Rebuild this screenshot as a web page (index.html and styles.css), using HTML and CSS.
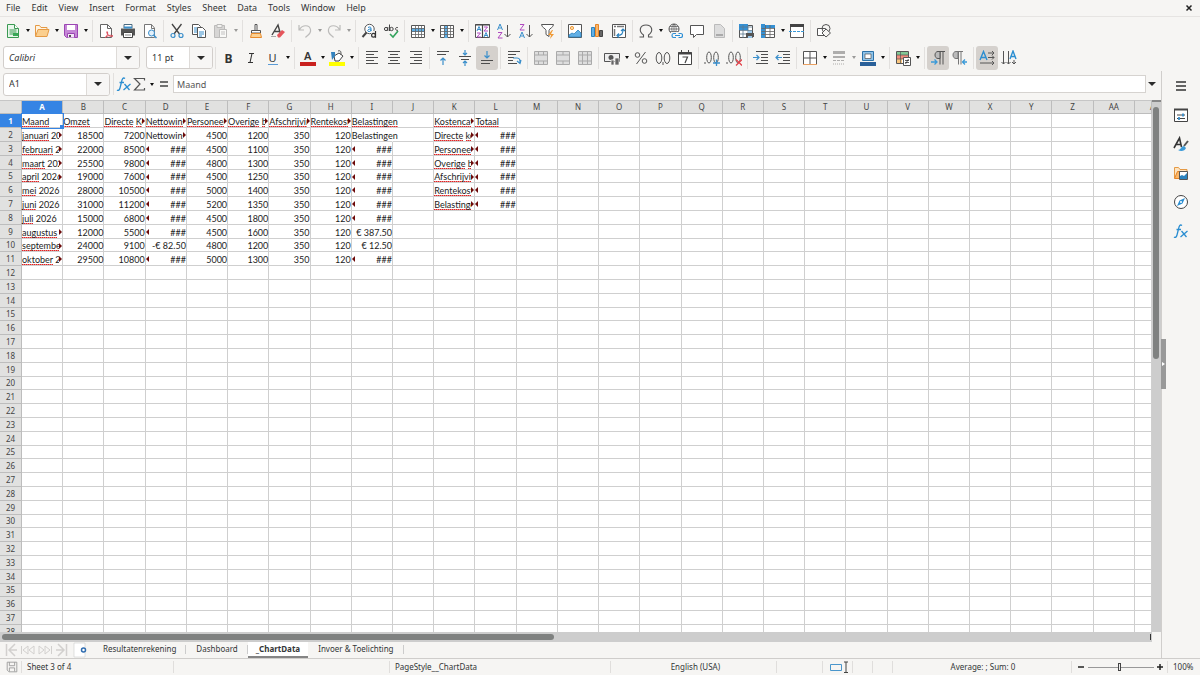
FILE: index.html
```html
<!DOCTYPE html>
<html lang="en">
<head>
<meta charset="utf-8">
<title>_ChartData</title>
<link rel="stylesheet" href="styles.css">
</head>
<body>
<nav class="menubar">
  <button>File</button><button>Edit</button><button>View</button><button>Insert</button><button>Format</button><button>Styles</button><button>Sheet</button><button>Data</button><button>Tools</button><button>Window</button><button>Help</button>
  <button class="close" aria-label="Close document"><svg class="glyph" viewBox="0 0 8 8"><path d="M1.500 1.500l5 5M6.500 1.500l-5 5" stroke="#222" stroke-width="1.500"/></svg></button>
</nav>
<div class="toolbar" id="standard" role="toolbar" aria-label="Standard"></div>
<div class="toolbar">
  <div class="combo combo-font"><input class="italic" aria-label="Font name" value="Calibri"><button aria-label="Font list"><i class="caret big"></i></button></div>
  <div class="combo combo-size"><input aria-label="Font size" value="11 pt"><button aria-label="Size list"><i class="caret big"></i></button></div>
  <div class="toolset" id="formatting" role="toolbar" aria-label="Formatting"></div>
</div>
<main class="workspace">
  <section class="document">
    <div class="formulabar">
      <div class="combo combo-name"><input aria-label="Name box" value="A1"><button aria-label="Range list"><i class="caret big"></i></button></div>
      <span class="sep"></span>
      <div class="toolset" id="formula"></div>
      <input class="formula" aria-label="Input line" value="Maand">
      <button class="expand" aria-label="Expand formula bar"><i class="caret big"></i></button>
    </div>
    <div class="sheet">
      <div class="viewport"><table class="grid" id="grid"></table></div>
      <div class="vscroll"><div class="vthumb"></div></div>
    </div>
    <div class="hscroll"><div class="hthumb"></div><i class="hend"></i></div>
    <div class="tabs">
      <div class="tabnav" id="tabnav"></div>
      <button class="addsheet" aria-label="Add sheet"><svg viewBox="0 0 16 16"><path d="M1 1h11v14H1z" fill="#fff" stroke="#ccc" stroke-width=".6"/><circle cx="10.500" cy="8" r="2" fill="#fff" stroke="#2f6db0" stroke-width="1.500"/></svg></button>
      <button class="tab">Resultatenrekening</button>
      <button class="tab">Dashboard</button>
      <button class="tab current">_ChartData</button>
      <button class="tab">Invoer &amp; Toelichting</button>
    </div>
  </section>
  <aside class="sidebar" id="sidebar"><button class="grip" aria-label="Hide sidebar"><i></i></button></aside>
</main>
<footer class="status">
  <span class="s-save"><svg viewBox="0 0 16 16" fill="none" stroke="#999"><path d="M2.500 2.500h11v11h-9l-2-2zM5 2.500v4h6v-4M5 13v-4h6v4"/></svg></span>
  <span class="s-sheet">Sheet 3 of 4</span>
  <span class="s-blank"></span>
  <span class="s-style">PageStyle__ChartData</span>
  <span class="s-lang">English (USA)</span>
  <span class="s-insert"></span>
  <span class="s-mode"><svg viewBox="0 0 22 14" fill="none"><path d="M1.500 4.500h11v6h-11z" stroke="#4a96cc"/><path d="M15 2h4M15 12.500h4M17 2v10.500" stroke="#444"/></svg></span>
  <span class="s-slot"></span><span class="s-slot"></span>
  <span class="s-sum">Average: ; Sum: 0</span>
  <span class="s-zoom"><button aria-label="Zoom out"><svg class="glyph" viewBox="0 0 8 8"><path d="M1 4h6" stroke="#222" stroke-width="1.500"/></svg></button><input type="range" aria-label="Zoom" min="0" max="100" value="48"><button aria-label="Zoom in"><svg class="glyph" viewBox="0 0 8 8"><path d="M1 4h6M4 1v6" stroke="#222" stroke-width="1.500"/></svg></button></span>
  <span class="s-pct">100%</span>
</footer>
<script src="app.js"></script>
</body>
</html>
```

FILE: styles.css
```css
* { box-sizing: border-box; }
body {
  margin: 0;
  height: 100vh;
  display: flex;
  flex-direction: column;
  overflow: hidden;
  background: #f6f5f3;
  color: #333637;
  font: 9px/12px "Noto Sans", sans-serif;
}
button, input { font: inherit; color: inherit; margin: 0; }
button { padding: 0; border: 0; background: none; display: flex; align-items: center; justify-content: center; }
svg { display: block; width: 16px; height: 16px; flex: none; }
.glyph { width: 8px; height: 8px; }

.menubar { display: flex; align-items: center; gap: 11px; height: 17px; padding: 0 7px 0 6px; border-bottom: 1px solid #e6e4e2; }
.menubar .close { margin-left: auto; }

.toolbar { display: flex; align-items: center; height: 27px; padding-left: 2px; }
.toolset { display: flex; align-items: center; }
.tool { width: 22px; height: 24px; border-radius: 3px; }
.tool.on { background: #d5d1cd; }
.drop { display: flex; width: 29px; }
.drop .more { width: 7px; }
.dim { opacity: .4; }
.sep { flex: none; width: 5px; height: 22px; background: linear-gradient(#e2e0de, #e2e0de) center / 1px 100% no-repeat; }
.drop + .sep { width: 6px; }
.caret { width: 0; height: 0; border: 2px solid transparent; border-top: 3px solid #111; border-bottom: 0; }
.caret.big { border-width: 4px 4px 0; border-top-color: #2b2b2b; }

.combo { display: flex; flex: none; height: 23px; border: 1px solid #d2cecb; border-radius: 3px; background: #fff; overflow: hidden; }
.combo input { flex: 1; min-width: 0; border: 0; padding: 0 5px; outline: 0; background: none; }
.combo button { width: 23px; background: #f7f6f5; border-left: 1px solid #dedbd8; }
.combo-font { width: 137px; margin: 0 6px 0 1px; }
.combo-size { width: 67px; }
.combo-name { width: 107px; margin: 0 1px 0 3px; }
.italic { font-style: italic; }

.workspace { flex: 1; min-height: 0; display: flex; }
.document { flex: 1; min-width: 0; display: flex; flex-direction: column; }
.formulabar { display: flex; align-items: center; height: 29px; padding-bottom: 3px; }
#formula .tool { width: 16px; }
#formula .drop { width: 24px; }
#formula .more { width: 8px; }
#formula { margin-right: 1px; }
.formula { flex: 1; min-width: 0; height: 18px; padding: 0 3px; border: 1px solid #d6d3d0; background: #fff; outline: 0; color: #555; }
.expand { width: 12px; margin-right: 3px; }

.sheet { flex: 1; min-height: 0; display: flex; }
.viewport { flex: 1; min-width: 0; overflow: hidden; background: #fff; }
.grid { width: 100%; table-layout: fixed; border-collapse: separate; border-spacing: 0; }
.grid tr { height: 14px; }
.grid tbody tr:nth-child(5n) { height: 13px; }
.grid th, .grid td { padding: 0; border: 0 solid #cfcfcf; border-width: 0 1px 1px 0; line-height: 12px; white-space: nowrap; }
.grid th { background: #e1e1e0; border-color: #bdbdbd; font-size: 8px; font-weight: 400; color: #444; overflow: hidden; }
.grid thead th { border-top: 1px solid #c6c6c6; }
.grid th.active { background: #3584e4; color: #fff; font-weight: 700; }
.grid th.partial { padding-left: 15px; }
.grid td { position: relative; font-family: Lato, sans-serif; color: #1c1c1c; text-align: right; }
.c-head { width: 22px; }
.c-last { width: 17px; }
.grid td.text { text-align: left; }
.grid td.spill { border-right-color: transparent; }
.grid td div { height: 12px; line-height: 14px; }
.grid td.clip div { overflow-x: clip; margin-right: 3px; }
.grid td.clip::after, .grid td.short::before {
  content: "";
  position: absolute;
  top: 4px;
  border: 3px solid transparent;
}
.grid td.clip::after { right: 0; border-left-color: #6d0a0a; border-right: 0; }
.grid td.short::before { left: 0; border-right-color: #6d0a0a; border-left: 0; }
.misspelt { background: repeating-linear-gradient(90deg, #dd2525 0 1px, #ef8585 1px 2px) 0 100% / 100% 1px no-repeat; }
.grid td.cursor { box-shadow: 0 0 0 1px #3584e4; z-index: 1; }
.grid td.cursor i { position: absolute; right: -2px; bottom: -2px; width: 4px; height: 4px; background: #3584e4; }

.vscroll { width: 9px; background: #cdcdcd; padding: 5px 2px 0 1px; border-top: 2px solid #888; }
.vthumb { height: 48%; border-radius: 3px; background: #7f8180; }
.hscroll { display: flex; align-items: center; justify-content: space-between; height: 10px; margin-right: 9px; padding: 0 1px 0 2px; background: #cdcdcd; }
.hthumb { width: 48%; height: 6px; border-radius: 3px; background: #7f8180; }
.hend { width: 1px; height: 6px; background: #333; }

.tabs { display: flex; align-items: stretch; height: 16px; font-size: 8px; }
.tabnav { display: flex; align-items: center; padding-left: 2px; color: #d2d0ce; }
.tabnav .tool { width: 17px; height: 16px; }
.addsheet { width: 22px; margin-right: 1px; }
.tab { padding: 0 10px; border-bottom: 2px solid transparent; background: linear-gradient(#ccc, #ccc) right center / 1px 9px no-repeat; }
.tab.current { padding: 0 8px; background: #fff; border-bottom-color: #858585; font-weight: 700; }

.sidebar { position: relative; flex: none; width: 39px; border-left: 1px solid #d0cecc; }
.sidebar .tool { width: 38px; height: 29px; }
.grip { position: absolute; left: -1px; top: 268px; width: 5px; height: 50px; background: #999; }
.grip i { border: 2px solid transparent; border-left: 3px solid #fff; border-right: 0; }

.status { display: flex; align-items: center; height: 17px; border-top: 1px solid #cfcdcb; font-size: 8px; }
.status > span { height: 12px; border-right: 1px solid #e0dedc; display: flex; align-items: center; flex: none; }
.status svg { height: 14px; }
.status .glyph { height: 8px; }
.s-save { width: 22px; padding-left: 4px; }
.status .s-sheet { width: 152px; padding-left: 5px; }
.status .s-blank { flex: 4 0 0; }
.status .s-style { flex: 4 0 0; padding-left: 5px; }
.status .s-lang { flex: 3 0 0; justify-content: center; padding-left: 4px; }
.s-insert { width: 46px; }
.status .s-mode { width: 30px; padding-left: 6px; }
.s-mode svg { width: 22px; }
.s-slot { width: 20px; }
.status .s-sum { width: 179px; justify-content: center; padding-left: 2px; }
.status .s-zoom { width: 96px; justify-content: space-between; padding: 0 3px 0 5px; }
.s-zoom input { appearance: none; width: 66px; height: 10px; background: linear-gradient(#999, #999) center / 100% 1px no-repeat; }
.s-zoom input::-webkit-slider-thumb { appearance: none; width: 3px; height: 8px; border: 1px solid #444; background: #eee; }
.status .s-pct { width: 32px; border: 0; padding-left: 5px; }
```

FILE: app.js
```js
const D = '#4d4d4d', B = '#3b8fcb';
const table = '<path d="M1.500 2.500h13v12h-13z" fill="#fff" stroke="#555"/>';
const lines = (rows) => `<path d="${rows.map(([x, y, w]) => `M${x} ${y}h${w}`).join('')}" stroke="${D}" stroke-width="1.100"/>`;
const text = (x, y, s, size, fill, extra = '') => `<text x="${x}" y="${y}" font-size="${size}" fill="${fill}" font-family="Noto Sans, sans-serif" ${extra}>${s}</text>`;
const merge = '<path d="M1.500 1.500h13v13h-13z" fill="#dedede" stroke="#aaa"/><path d="M1 5h14M1 11h14M5.500 1v4M10.500 1v4M5.500 11v4M10.500 11v4" stroke="#aaa"/>';

const icons = {
  new: '<path d="M2.500 1.500h7l4 4v9h-11z" fill="#e9f7ec" stroke="#3a9a52"/><path d="M9.500 1.500v4h4" fill="#fff" stroke="#3a9a52"/><path d="M4.500 7h7M4.500 9h7M4.500 11h4" stroke="#3a9a52"/><path d="M8 10h5v3H8z" fill="#3aa757"/>',
  open: '<path d="M1.500 13V2.500h4l1.500 2h6v2" fill="#fff3e0" stroke="#e59a45"/><path d="M1.500 13.500l2.500-7h11l-2 7z" fill="#fbcf8e" stroke="#e59a45"/>',
  save: '<path d="M1.500 1.500h13v13h-11l-2-2z" fill="#c587d6" stroke="#9b45b3"/><path d="M4 2h8v5H4z" fill="#fff"/><path d="M4.500 14.500v-4h7v4" fill="#f4e9f7" stroke="#9b45b3"/><path d="M6 12h2v2H6z" fill="#555"/>',
  pdf: '<path d="M2.500 1.500h7l4 4v9h-11z" fill="#fff" stroke="#666"/><path d="M9.500 1.500v4h4" fill="none" stroke="#666"/><path d="M7 15c2.500-2 3-5 2.500-6s-1.500 0 0 2 3 3 5.500 2c-2-1.500-5-.5-8 1.500" fill="none" stroke="#dc4a58"/>',
  print: '<path d="M4 5V1.500h8V5" fill="#fff" stroke="#4a6a80"/><path d="M1 5.500h14v7H1z" fill="#555"/><path d="M4 4.500h8" stroke="#3b8fcb" stroke-width="2"/><path d="M3.500 9.500h9v5h-9z" fill="#fff" stroke="#444"/><path d="M5 12h6" stroke="#888"/>',
  preview: '<path d="M2.500 1.500h7l3 3.500v9.500h-10z" fill="#fff" stroke="#777"/><path d="M9.500 1.500v4h3" fill="none" stroke="#777"/><circle cx="9.500" cy="10" r="3" fill="#e4f1fb" stroke="#3b8fcb"/><path d="M11.500 12l3 3" stroke="#3b8fcb" stroke-width="1.500"/>',
  cut: '<path d="M3 1l7.500 10M12.500 1L5 11" stroke="#444" fill="none" stroke-width="1.300"/><circle cx="4" cy="12.500" r="2" fill="none" stroke="#3b8fcb" stroke-width="1.200"/><circle cx="12" cy="12.500" r="2" fill="none" stroke="#3b8fcb" stroke-width="1.200"/>',
  copy: '<path d="M1.500 1.500h6l2 2v8h-8z" fill="#fff" stroke="#555"/><path d="M3 5h4M3 7h3M3 9h3" stroke="#3b8fcb"/><path d="M6.500 4.500h5l3 3v7h-8z" fill="#fff" stroke="#555"/><path d="M8 9h5M8 11h5M8 13h3" stroke="#3b8fcb"/>',
  paste: '<path d="M1.500 2.500h10v12h-10z" fill="#aaa" stroke="#666"/><path d="M4 1.500h5v3H4z" fill="#eee" stroke="#666"/><path d="M6.500 6.500h7v8h-7z" fill="#fff" stroke="#666"/><path d="M8 9h4M8 11h4" stroke="#777"/>',
  clone: '<path d="M7 1.500h2v6H7z" fill="#fff" stroke="#555"/><path d="M3.500 7.500h9v2.500h-9z" fill="#fff" stroke="#555"/><path d="M3.500 10.500h9l1 4h-11z" fill="#fcd193" stroke="#e88b2c"/>',
  clear: '<path d="M2 12L8 2l2.500 9M4 8.500h6" fill="none" stroke="#444" stroke-width="1.400"/><path d="M7 12l5-5 3 2-5 5.500H8z" fill="#e5555b"/><path d="M1 13.500h5" stroke="#aaa"/>',
  undo: '<path d="M2 2v5h5M2.500 6.500c3-5 10-5 11 0s-4 6-5 8" fill="none" stroke="#666" stroke-width="1.200"/>',
  redo: '<path d="M14 2v5H9M13.500 6.500c-3-5-10-5-11 0s4 6 5 8" fill="none" stroke="#666" stroke-width="1.200"/>',
  find: '<circle cx="8.500" cy="6" r="4.700" fill="#fff" stroke="#555"/><path d="M5.500 9.500L1.500 14" stroke="#444" stroke-width="2"/><path d="M7 4.500c2-1 3-.5 3 1v3M10 6c-4 0-4 2.500-2 2.500 1 0 2-.7 2-1.500" fill="none" stroke="#1e82c8"/><path d="M10 8h6v8h-6z" fill="#f6f5f3"/><circle cx="12.500" cy="12.300" r="1.900" fill="none" stroke="#333" stroke-width="1.200"/><path d="M14.500 8v6.800" stroke="#333" stroke-width="1.200"/>',
  spell: '<circle cx="3" cy="6" r="1.600" fill="none" stroke="#444"/><path d="M4.800 4v4M6.500 1.500V8M15 4.700c-3-1.400-3.500 3.300 0 2.600" fill="none" stroke="#444"/><circle cx="8.500" cy="6" r="1.700" fill="none" stroke="#444"/><path d="M7 11l3 3 5-6" fill="none" stroke="#34a35d" stroke-width="1.600"/>',
  row: table + '<path d="M2 5h12v4H2z" fill="#5fb0e8"/><path d="M1.500 5.500h13M1.500 8.500h13M1.500 11.500h13M5.500 2.500v12M8.500 2.500v12M11.500 2.500v12" stroke="#666" stroke-width=".8"/>',
  column: table + '<path d="M5 3h4v12H5z" fill="#5fb0e8"/><path d="M1.500 5.500h13M1.500 8.500h13M1.500 11.500h13M5.500 2.500v12M8.500 2.500v12M11.500 2.500v12" stroke="#666" stroke-width=".8"/>',
  sort: '<path d="M1.500 1.500h14v13h-14z" fill="#fff" stroke="#555"/><path d="M1 2h15M8.500 2v13" stroke="#444" stroke-width="1.200"/><path d="M3 8l2-4.500L7 8M3.500 6.500h3M10 14l2-4.500 2 4.500M10.500 12.500h3" fill="none" stroke="#3b8fcb"/><path d="M3 10h3.500L3 14h4M10 4h3.500L10 8h4" fill="none" stroke="#b04ac0"/>',
  az: '<path d="M1.500 7L4 1l2.500 6M2.500 5h3" fill="none" stroke="#3b8fcb"/><path d="M2 9.500h4L2 15h4.500" fill="none" stroke="#b04ac0"/><path d="M11.500 2v12M8.500 11l3 3 3-3" fill="none" stroke="#555"/>',
  za: '<path d="M2 1.500h4L2 7h4.500" fill="none" stroke="#b04ac0"/><path d="M1.500 15L4 9l2.500 6M2.500 13h3" fill="none" stroke="#3b8fcb"/><path d="M11.500 2v12M8.500 11l3 3 3-3" fill="none" stroke="#555"/>',
  filter: '<path d="M1.500 1.500h12c0 3-4.500 4-4.500 6v6l-3-2v-4c0-2-4.500-3-4.500-6z" fill="#fff" stroke="#555"/><path d="M12 7l-4 5h3l-1 4 4-5h-3l2-4z" fill="#f09a35"/>',
  image: '<path d="M1.500 1.500h13v13h-13z" fill="#fff" stroke="#555"/><circle cx="5" cy="5" r="1.600" fill="#fde0b0" stroke="#ee9a3a"/><path d="M2 14v-2l3-2 2 1 4-4 3 3v4z" fill="#62b0e6" stroke="#2c83bf" stroke-width=".8"/>',
  chart: '<path d="M2.500 4.500h3v9h-3z" fill="#62b0e6" stroke="#2c83bf"/><path d="M6.500 1.500h3v12h-3z" fill="#f9b66b" stroke="#e58427"/><path d="M10.500 7.500h3v6h-3z" fill="#666" stroke="#444"/>',
  pivot: '<path d="M1.500 1.500h13v13h-13z" fill="#fff" stroke="#555"/><path d="M3 3.500h2M6 3.500h7M3.500 6v7" stroke="#777" stroke-width="1.500"/><path d="M6 12.500c5 0 6-2 6-6M10 8l2-2 2 2M8 10.500l-2 2 2 2" fill="none" stroke="#2c83bf" stroke-width="1.200"/>',
  omega: '<path d="M1.500 14h4v-2C0 8 2 2 8 2s8 6 2.500 10v2h4" fill="none" stroke="#555" stroke-width="1.100"/>',
  link: '<circle cx="7" cy="6" r="5" fill="#fff" stroke="#555"/><path d="M2 6h10M7 1v10M3 3.500h8M3 8.500h8M7 1c-3 3-3 7 0 10M7 1c3 3 3 7 0 10" fill="none" stroke="#555" stroke-width=".7"/><path d="M4 9h12v7H4z" fill="#f6f5f3"/><path d="M9 10.500H6.500c-2 0-2 4 0 4H9M11.500 10.500H14c2 0 2 4 0 4h-2.500M8 12.500h5" fill="none" stroke="#2c8fd6" stroke-width="1.200"/>',
  comment: '<path d="M1.500 2.500h13v9h-7l-3 3v-3h-3z" fill="#fff" stroke="#555"/>',
  page: '<path d="M3.500 1.500h6l4 4v9h-10z" fill="#ddd" stroke="#bbb"/><path d="M5 12h7" stroke="#aaa" stroke-width="2"/>',
  range: table + '<path d="M1 1h9v6H1z" fill="#3590d3"/><path d="M1.500 4h13M1.500 7.500h13M1.500 11h13M5 2v13M10 2v13" stroke="#5a7890" stroke-width=".8"/><path d="M8 10h8v4H8z" fill="#555"/><path d="M10 9h4M10 14h4" stroke="#9cc8ea" stroke-width="2"/>',
  freeze: table + '<path d="M1 1h4v14H1zM5 2h10v3H5z" fill="#3590d3"/><path d="M1.500 5.500h13M1.500 8.500h13M1.500 11.500h13M5.500 2v13M10 2v13" stroke="#666" stroke-width=".8"/>',
  split: '<path d="M1.500 1.500h13v13h-13z" fill="#fff" stroke="#555"/><path d="M1 2.500h14" stroke="#444" stroke-width="3"/><path d="M0 8.500h16" stroke="#3b9ad8" stroke-dasharray="3 1"/>',
  shapes: '<path d="M1.500 5.500h8v7h-8z" fill="#fff" stroke="#555"/><circle cx="10" cy="5.500" r="4" fill="none" stroke="#555"/><path d="M10 6l4.500 4-4.500 4-4-4z" fill="#f6f5f3" stroke="#555"/>',
  bold: text(3.500, 12.500, 'B', 12, '#333', 'font-weight="700"'),
  italic: '<path d="M6 3.500h5M5 12.500h5M9 3.500l-2 9" stroke="#333" stroke-width="1.100"/>',
  underline: text(3.500, 12, 'U', 11, '#333') + '<path d="M3 14.500h10" stroke="#5b9bd5"/>',
  color: text(4, 10, 'A', 11, '#333', 'font-weight="600"') + '<path d="M0 12h16v4H0z" fill="#c9211e"/>',
  highlight: '<path d="M0 12h16v4H0z" fill="#ff0"/><path d="M5 6l5-3 4 3-4 5H6z" fill="#fff" stroke="#444"/><path d="M2 2h4v4l-3 4z" fill="#3382be"/><path d="M9 1c3-1 3 1 3 4" fill="none" stroke="#555"/>',
  left: lines([[2, 1.5, 12], [2, 4.5, 8], [2, 7.5, 12], [2, 10.5, 8], [2, 13.5, 12]]),
  center: lines([[2, 1.5, 12], [4, 4.5, 8], [2, 7.5, 12], [4, 10.5, 8], [2, 13.5, 12]]),
  right: lines([[2, 1.5, 12], [6, 4.5, 8], [2, 7.5, 12], [6, 10.5, 8], [2, 13.5, 12]]),
  top: lines([[2, 1.5, 12], [2, 4.5, 9]]) + `<path d="M8 15V8M5.500 10.500L8 8l2.500 2.500" fill="none" stroke="${B}" stroke-width="1.200"/>`,
  middle: lines([[2, 6.5, 12], [4, 9.5, 8]]) + `<path d="M8 0v5M6 3l2 2 2-2M8 16v-5M6 13l2-2 2 2" fill="none" stroke="${B}" stroke-width="1.200"/>`,
  bottom: lines([[2, 10.5, 12], [2, 13.5, 9]]) + `<path d="M8 1v7M5.500 5.500L8 8l2.500-2.500" fill="none" stroke="${B}" stroke-width="1.200"/>`,
  wrap: lines([[2, 1.5, 12], [2, 4.5, 8], [2, 7.5, 6], [2, 10.5, 5], [2, 13.5, 9]]) + `<path d="M7 8h4c3 0 3 2 3 5M11 11l3 2.500 1-3.500" fill="none" stroke="${B}" stroke-width="1.200"/>`,
  merge1: merge,
  merge2: merge.replace('M5.500 1v4M10.500 1v4', 'M8 1v4').replace('M5.500 11v4M10.500 11v4', 'M8 11v4'),
  merge3: merge + '<path d="M5.500 5v6M10.500 5v6" stroke="#aaa"/>',
  currency: '<path d="M.5 3.500h15v8H.5z" fill="#eee" stroke="#555"/><circle cx="7" cy="7.500" r="2.500" fill="#555"/><path d="M7 10h3v5H7zM11 8h4v7h-4z" fill="#666" stroke="#f6f5f3" stroke-width=".7"/>',
  percent: '<circle cx="4.500" cy="5" r="2.300" fill="none" stroke="#555"/><circle cx="11.500" cy="11" r="2.300" fill="none" stroke="#555"/><path d="M12.500 2l-9 12" stroke="#555"/>',
  number: '<ellipse cx="4" cy="8" rx="2.800" ry="5.500" fill="none" stroke="#555"/><ellipse cx="12" cy="8" rx="2.800" ry="5.500" fill="none" stroke="#555"/><path d="M8 12v3" stroke="#555"/>',
  date: '<path d="M1.500 2.500h13v12h-13z" fill="#fff" stroke="#444"/><path d="M1 3.500h14" stroke="#444" stroke-width="2"/><path d="M4.500 0v3M11.500 0v3" stroke="#444"/><path d="M5.500 7h5L8 13" fill="none" stroke="#444" stroke-width="1.200"/>',
  adddec: '<path d="M1 12v2" stroke="#555"/><ellipse cx="5" cy="7.500" rx="2.300" ry="5.500" fill="none" stroke="#555"/><ellipse cx="12" cy="7.500" rx="2.300" ry="5.500" fill="none" stroke="#555"/><path d="M12.500 9.500v7M9 13h7" stroke="#3b8fcb" stroke-width="1.300"/>',
  deldec: '<path d="M1 12v2" stroke="#555"/><ellipse cx="5" cy="7.500" rx="2.300" ry="5.500" fill="none" stroke="#555"/><ellipse cx="12" cy="7.500" rx="2.300" ry="5.500" fill="none" stroke="#555"/><path d="M10 9.500l6 6M16 9.500l-6 6" stroke="#e2434b" stroke-width="1.300"/>',
  indent: lines([[3, 1.5, 12], [8, 4.5, 7], [8, 7.5, 7], [8, 10.5, 7], [3, 13.5, 12]]) + `<path d="M0 7.500h6M3.500 5L6 7.500 3.500 10" fill="none" stroke="${B}" stroke-width="1.200"/>`,
  outdent: lines([[3, 1.5, 12], [8, 4.5, 7], [8, 7.5, 7], [8, 10.5, 7], [3, 13.5, 12]]) + `<path d="M7 7.500H1M3.500 5L1 7.500 3.500 10" fill="none" stroke="${B}" stroke-width="1.200"/>`,
  borders: '<path d="M1.500 1.500h13v13h-13zM8 1.500v13M1.500 8h13" fill="#fff" stroke="#555"/><path d="M1 14.500h14" stroke="#e9a061"/>',
  style: '<path d="M2 2.500h12" stroke="#444" stroke-width="3"/><path d="M2 7h12" stroke="#444" stroke-width="2"/><path d="M2 10.500h12" stroke="#444" stroke-dasharray="3 1"/><path d="M2 14h12" stroke="#444" stroke-dasharray="1 1"/>',
  bordercolor: '<path d="M2.500 1.500h11v9h-11z" fill="#8ec3ea" stroke="#2c72a8"/><path d="M5 4h6v4.500H5z" fill="#fff" stroke="#555" stroke-width=".7"/><path d="M0 12h16v4H0z" fill="#2a6099"/>',
  cond: '<path d="M1.500 1.500h12v12h-12z" fill="#fff" stroke="#555"/><path d="M2 2h11v3H2z" fill="#82c795"/><path d="M2 5h11v4H2z" fill="#ef8c7c"/><path d="M2 9h5v4H2z" fill="#fac67f"/><path d="M5.500 1.500v12M2 5h12M2 9h7" stroke="#555" stroke-width=".7"/><path d="M8.500 7.500h7v8h-7z" fill="#fff" stroke="#555"/><path d="M10 10.500h4M10 12.500h4M13.500 9l-3 5" stroke="#333" stroke-width=".8"/>',
  ltr: '<path d="M10 1.500v13M13 1.500v13M7 1.500h8" stroke="#555" fill="none"/><path d="M10 1.500H8c-4 0-4 7 0 7h2z" fill="#bbb" stroke="#555"/><path d="M1 12h6M4.500 9.500L7 12l-2.500 2.500" fill="none" stroke="#3b9ad8" stroke-width="1.300"/>',
  rtl: '<path d="M6.500 1.500v13M9 1.500v13M4 1.500h7" stroke="#777" fill="none"/><path d="M6 1.500H4c-4 0-4 7 0 7h2z" fill="#bbb" stroke="#777"/><path d="M15 12h-4M13 9.500L10.500 12l2.500 2.500" fill="none" stroke="#3b9ad8" stroke-width="1.300"/>',
  horiz: '<path d="M1 10l3.500-8.500L8 10M2.500 7.500h4" fill="none" stroke="#2b8ed1" stroke-width="1.400"/><path d="M9 3h6M13 1l2 2-2 2M9 7.500h6M13 5.500l2 2-2 2M1 13h14M13 11l2 2-2 2" fill="none" stroke="#555"/>',
  vert: '<path d="M9 9l3-8 3 8M10 6.500h4" fill="none" stroke="#2b8ed1" stroke-width="1.400"/><path d="M2.500 1v13M.5 12l2 2 2-2M7.500 1v13M5.500 12l2 2 2-2M13 10v4M11 12l2 2 2-2" fill="none" stroke="#555"/>',
  fx: '<path d="M9 2.500C7 1 6 3 5.500 6L4 12c-.5 2-1.500 3-3 2M3.500 6.500H8M8.500 8l5 6M14.500 8l-7 6" fill="none" stroke="#2b8ed1" stroke-width="1.300"/>',
  sum: '<path d="M12.500 4.500v-2h-10L8 8l-5.500 6h10v-2" fill="none" stroke="#555" stroke-width="1.200"/>',
  equals: '<path d="M4 6h8M4 10h8" stroke="#444" stroke-width="1.500"/>',
  menu: '<path d="M3 4h10M3 8h10M3 12h10" stroke="#333" stroke-width="1.500"/>',
  properties: '<path d="M1.500 2.500h13v12h-13z" fill="#fff" stroke="#444"/><path d="M1 2.500h14" stroke="#444" stroke-width="2"/><path d="M4 8h8M4 11.500h8" stroke="#444"/><path d="M10 6.500v3M6 10v3" stroke="#3b8fcb" stroke-width="1.800"/>',
  styles: '<path d="M1 12L6.500 2l2 9M3 8.500h5" fill="none" stroke="#333" stroke-width="1.600"/><path d="M15 5l-4 5" stroke="#555" stroke-width="2"/><path d="M11 10c-3 0-3 4-6 4 3 2 7 1 8-2z" fill="#3b9ad8"/>',
  gallery: '<path d="M1.500 13V2.500h4l1.500 2h7v3" fill="#fde3bf" stroke="#e59a45"/><path d="M1.500 13.500l3-7h3v7z" fill="#fbb86b" stroke="#e58427"/><path d="M6.500 6.500h8v8h-8z" fill="#fff" stroke="#555"/><path d="M7 14v-3l2-1 2 1 3-3v6z" fill="#2c83bf"/>',
  navigator: '<circle cx="8" cy="8" r="6.500" fill="#fff" stroke="#444"/><path d="M12 4l-2.500 5.500L4 12l2.500-5.500z" fill="#2b8ed1"/><circle cx="8" cy="8" r="1" fill="#fff"/>',
  first: '<path d="M3.500 2v12M12 2L6 8l6 6M6 8h8" fill="none" stroke="currentColor" stroke-width="1.500"/>',
  prev: '<path d="M8 4L3 8l5 4zM14 4L9 8l5 4zM1.500 4v8" fill="none" stroke="currentColor"/>',
  next: '<path d="M2 4l5 4-5 4zM8 4l5 4-5 4zM14.500 4v8" fill="none" stroke="currentColor"/>',
  last: '<path d="M12.500 2v12M4 2l6 6-6 6M2 8h8" fill="none" stroke="currentColor" stroke-width="1.500"/>'
};

// "+" adds a drop-down arrow, "*" marks a pressed toggle, "~" a disabled tool, "|" a separator.
const build = (id, spec) => {
  const html = spec.split(' ').map((item) => {
    if (item === '|') return '<span class="sep"></span>';
    const name = item.replace(/[+*~]/g, '');
    const dim = item.includes('~') ? ' dim' : '';
    const on = item.includes('*') ? ' on' : '';
    const tool = `<button class="tool${on}${dim}" aria-label="${name}"><svg viewBox="0 0 16 16">${icons[name]}</svg></button>`;
    return item.includes('+') ? `<span class="drop">${tool}<button class="more${dim}" aria-label="${name} options"><i class="caret"></i></button></span>` : tool;
  }).join('');
  document.getElementById(id).insertAdjacentHTML('beforeend', html);
};

build('standard', 'new+ open+ save+ | pdf print preview | cut copy paste+~ | clone clear | undo+~ redo+~ | find spell | row+ column+ | sort az za filter | image chart pivot | omega+ link comment page | range freeze+ split | shapes');
build('formatting', '| bold italic underline+ | color+ highlight+ | left center right | top middle bottom* | wrap | merge1 merge2 merge3 | currency+ percent number date | adddec deldec | indent outdent | borders+ style+~ bordercolor+ | cond+ | ltr* rtl | horiz* vert');
build('formula', 'fx sum+ equals');
build('sidebar', 'menu properties styles gallery navigator fx');
build('tabnav', 'first prev next last');

const months = ['januari 2026', 'februari 2026', 'maart 2026', 'april 2026', 'mei 2026', 'juni 2026', 'juli 2026', 'augustus 2026', 'september 2026', 'oktober 2026'];
const figures = [
  [18500, 7200, 'Nettowinst', 4500, 1200, 'Belastingen'],
  [22000, 8500, '###', 4500, 1100, '###'],
  [25500, 9800, '###', 4800, 1300, '###'],
  [19000, 7600, '###', 4500, 1250, '###'],
  [28000, 10500, '###', 5000, 1400, '###'],
  [31000, 11200, '###', 5200, 1350, '###'],
  [15000, 6800, '###', 4500, 1800, '###'],
  [12000, 5500, '###', 4500, 1600, '€ 387.50'],
  [24000, 9100, '-€ 82.50', 4800, 1200, '€ 12.50'],
  [29500, 10800, '###', 5000, 1300, '###']
];
const costs = ['Directe kosten', 'Personeelskosten', 'Overige bedrijfskosten', 'Afschrijvingen', 'Rentekosten', 'Belastingen'];
const rows = [['Maand', 'Omzet', 'Directe Kosten', 'Nettowinst', 'Personeelskosten', 'Overige bedrijfskosten', 'Afschrijvingen', 'Rentekosten', 'Belastingen', '', 'Kostencategorie', 'Totaal']];
figures.forEach(([b, c, d, e, f, i], n) => {
  rows.push([months[n], b, c, d, e, f, 350, 120, i, '', costs[n] || '', costs[n] ? '###' : '']);
});

const cell = (value, r, c) => {
  if (value === '' || value === undefined) return '<td></td>';
  if (value === '###') return '<td class="short"><div>###</div></td>';
  const isText = typeof value === 'string' && !value.includes('€');
  if (!isText) return `<td><div>${value}</div></td>`;
  const fits = /^(mei|juni|juli) /.test(value) || ['Maand', 'Omzet', 'Totaal'].includes(value);
  const spills = c === 8;
  const plain = r === 1 && c > 0 && c < 9;
  const marked = plain ? value : value.replace(/\p{L}+/gu, '<span class="misspelt">$&</span>');
  const kind = spills ? 'spill' : fits ? '' : 'clip';
  const cursor = r === 0 && c === 0;
  return `<td class="text ${kind}${cursor ? ' cursor' : ''}"><div>${marked}</div>${cursor ? '<i></i>' : ''}</td>`;
};

const letters = [...'ABCDEFGHIJKLMNOPQRSTUVWXYZ', 'AA', 'AB'];
let html = '<colgroup><col class="c-head"><col span="27"><col class="c-last"></colgroup><thead><tr><th></th>';
html += letters.map((l, i) => `<th class="${i === 0 ? 'active' : i === 27 ? 'partial' : ''}">${l}</th>`).join('') + '</tr></thead><tbody>';
for (let r = 0; r < 38; r++) {
  html += `<tr><th class="${r === 0 ? 'active' : ''}">${r + 1}</th>` + letters.map((_, c) => cell((rows[r] || [])[c], r, c)).join('') + '</tr>';
}
document.getElementById('grid').innerHTML = html + '</tbody>';
```
